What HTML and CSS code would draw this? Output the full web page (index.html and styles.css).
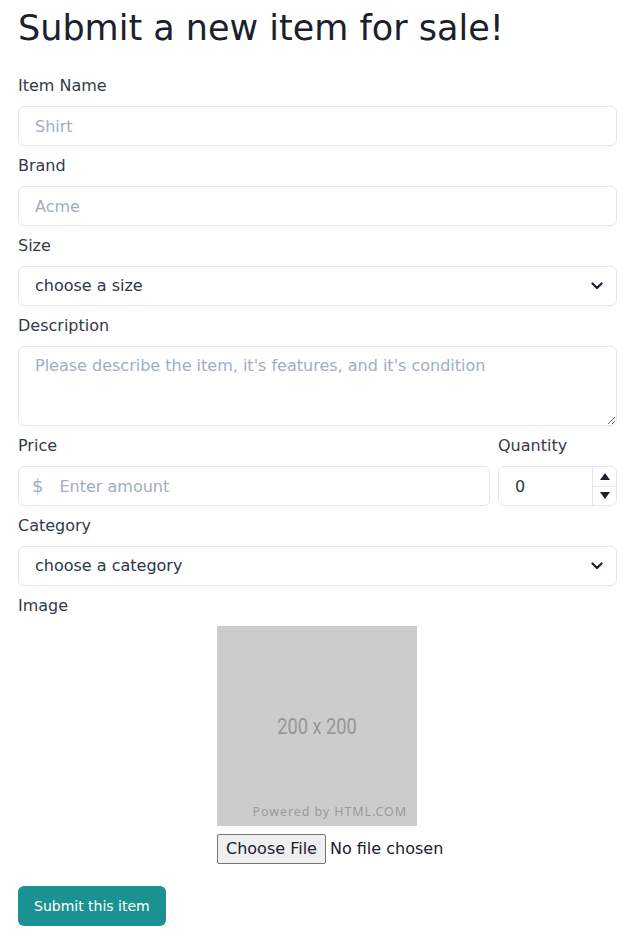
FILE: index.html
```html
<!DOCTYPE html>
<html lang="en">
<head>
  <meta charset="UTF-8" />
  <meta name="viewport" content="width=device-width, initial-scale=1.0" />
  <title>Submit an item</title>
  <link rel="stylesheet" href="styles.css">
</head>
<body>

<main class="page">
  <h1 class="title">Submit a new item for sale!</h1>

  <form class="item-form">
    <div class="field first">
      <label for="name">Item Name</label>
      <input id="name" type="text" placeholder="Shirt" />
    </div>

    <div class="field">
      <label for="brand">Brand</label>
      <input id="brand" type="text" placeholder="Acme" />
    </div>

    <div class="field">
      <label for="size">Size</label>
      <div class="select-wrap">
        <select id="size">
          <option>choose a size</option>
        </select>
        <svg class="chevron" width="12" height="8" viewBox="0 0 12 8"><path d="M1.5 1.5 6 6l4.5-4.5" fill="none" stroke="#1a202c" stroke-width="2.2" stroke-linecap="round" stroke-linejoin="round"/></svg>
      </div>
    </div>

    <div class="field">
      <label for="desc">Description</label>
      <textarea id="desc" placeholder="Please describe the item, it's features, and it's condition"></textarea>
    </div>

    <div class="row">
      <div class="field price">
        <label for="price">Price</label>
        <div class="money">
          <span class="currency">$</span>
          <input id="price" type="text" placeholder="Enter amount" />
        </div>
      </div>
      <div class="field qty">
        <label for="qty">Quantity</label>
        <div class="number">
          <input id="qty" type="text" value="0" />
          <div class="spin">
            <span class="spin-btn"><svg width="10" height="7" viewBox="0 0 10 7"><path d="M5 0 10 7H0z" fill="#1a202c"/></svg></span>
            <span class="spin-btn"><svg width="10" height="7" viewBox="0 0 10 7"><path d="M0 0h10L5 7z" fill="#1a202c"/></svg></span>
          </div>
        </div>
      </div>
    </div>

    <div class="field">
      <label for="category">Category</label>
      <div class="select-wrap">
        <select id="category">
          <option>choose a category</option>
        </select>
        <svg class="chevron" width="12" height="8" viewBox="0 0 12 8"><path d="M1.5 1.5 6 6l4.5-4.5" fill="none" stroke="#1a202c" stroke-width="2.2" stroke-linecap="round" stroke-linejoin="round"/></svg>
      </div>
    </div>

    <div class="field">
      <label for="image">Image</label>
      <div class="image-pick">
        <div class="preview">
          <span class="preview-size">200 x 200</span>
          <span class="preview-credit">Powered by HTML.COM</span>
        </div>
        <input id="image" type="file" />
      </div>
    </div>

    <button type="button" class="submit">Submit this item</button>
  </form>
</main>

</body>
</html>
```

FILE: styles.css
```css
body {
  margin: 0;
  background: #fff;
  color: #2d3748;
  font-family: 'DejaVu Sans', 'Noto Sans', sans-serif;
  font-size: 16px;
}
.page {
  width: 599px;
  margin-left: 18px;
}
.title {
  margin: 0 0 18px;
  font-size: 35px;
  font-weight: normal;
  line-height: 56px;
  color: #1a202c;
}

/* Form fields */
.field label {
  display: block;
  padding: 8px 0;
  line-height: 24px;
  color: #333b48;
}
.field.first label {
  padding-top: 0;
}
input[type="text"],
select,
textarea {
  box-sizing: border-box;
  width: 100%;
  height: 40px;
  margin: 0;
  padding: 7px 16px;
  border: 1px solid #e2e8f0;
  border-radius: 6px;
  background: #fff;
  font: inherit;
  line-height: 24px;
  color: #2d3748;
  outline: none;
}
::placeholder {
  color: #a0aec0;
  opacity: 1;
}
textarea {
  display: block;
  height: 80px;
  padding-top: 7px;
}
.select-wrap {
  position: relative;
}
.select-wrap select {
  appearance: none;
  -webkit-appearance: none;
}
.chevron {
  position: absolute;
  right: 14px;
  top: 16px;
  pointer-events: none;
}

/* Price + quantity */
.row {
  display: flex;
  gap: 8px;
}
.price {
  flex: 1;
}
.qty {
  width: 119px;
}
.money,
.number {
  display: flex;
  height: 40px;
  box-sizing: border-box;
  border: 1px solid #e2e8f0;
  border-radius: 6px;
  overflow: hidden;
}
.money input,
.number input {
  border: none;
  border-radius: 0;
  height: 38px;
  flex: 1;
  min-width: 0;
}
.currency {
  padding-left: 13px;
  line-height: 38px;
  font-size: 18px;
  color: #a0aec0;
}
.spin {
  display: flex;
  flex-direction: column;
  width: 23px;
  border-left: 1px solid #e2e8f0;
}
.spin-btn {
  flex: 1;
  display: flex;
  align-items: center;
  justify-content: center;
}
.spin-btn + .spin-btn {
  border-top: 1px solid #e2e8f0;
}

/* Image picker */
.image-pick {
  width: 200px;
  margin-left: 199px;
}
.preview {
  display: flex;
  flex-direction: column;
  align-items: center;
  justify-content: flex-end;
  width: 200px;
  height: 200px;
  background: #cccccc;
}
.preview-size {
  display: inline-block;
  margin-bottom: 64px;
  font-family: Roboto, 'Liberation Sans', sans-serif;
  font-size: 22px;
  color: #969696;
  transform: scaleX(0.83);
}
.preview-credit {
  align-self: flex-end;
  margin: 0 10px 6px 0;
  font-family: 'Noto Sans', sans-serif;
  font-size: 12.5px;
  letter-spacing: 0.9px;
  color: #999;
}
.image-pick input[type="file"] {
  display: block;
  margin-top: 8px;
  font: inherit;
  line-height: 22px;
  color: #1a202c;
  white-space: nowrap;
}
.image-pick input[type="file"]::file-selector-button {
  height: 30px;
  margin-right: 4px;
  padding: 0 8px;
  border: 1px solid #767676;
  border-radius: 2px;
  background: #efefef;
  font: inherit;
  color: #1a202c;
}

.submit {
  display: block;
  margin-top: 22px;
  height: 40px;
  padding: 0 16px;
  border: none;
  border-radius: 6px;
  background: #1b9292;
  color: #fff;
  font-family: inherit;
  font-size: 14px;
  cursor: pointer;
}
```
